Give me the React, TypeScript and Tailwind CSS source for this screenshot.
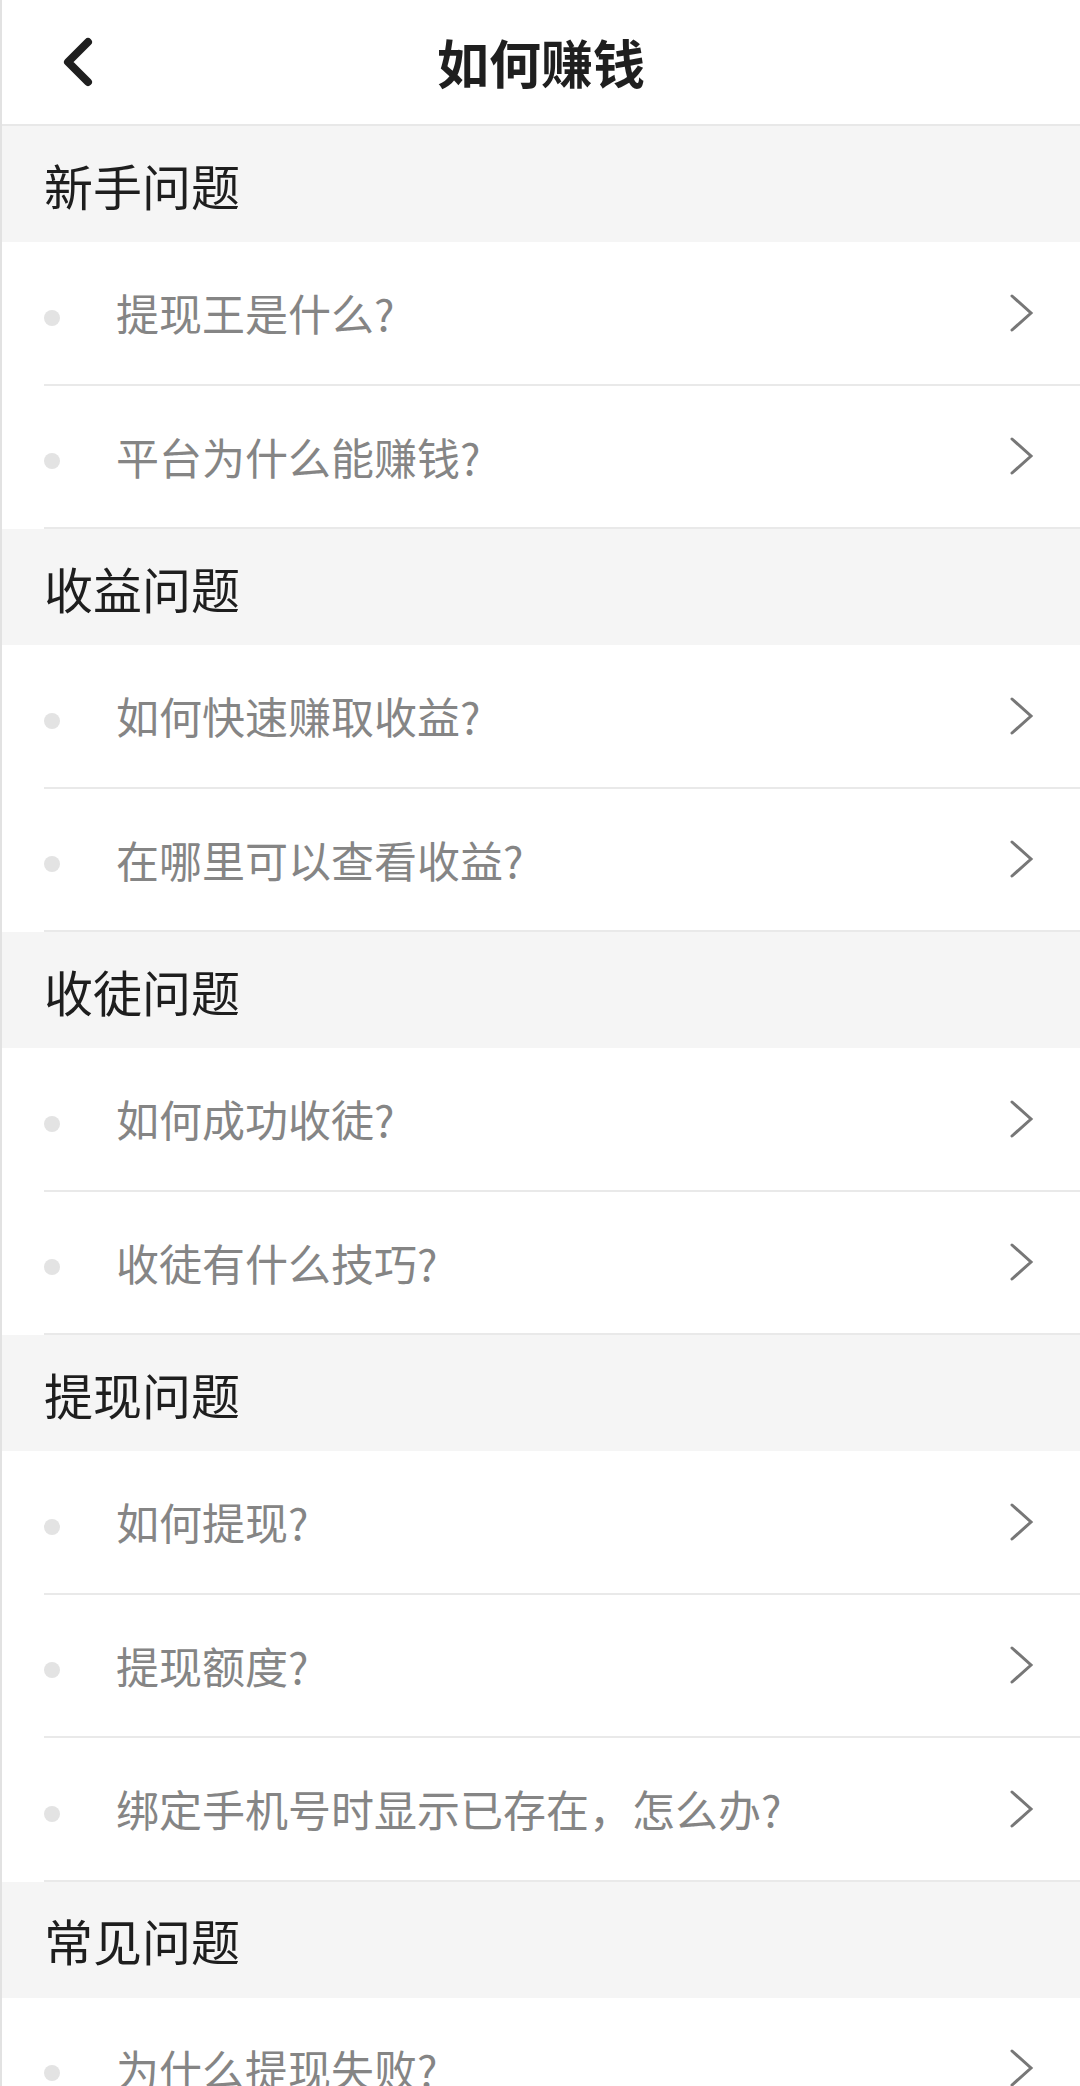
import { Fragment } from "react";

const sections = [
    { title: "新手问题", items: ["提现王是什么?", "平台为什么能赚钱?"] },
    { title: "收益问题", items: ["如何快速赚取收益?", "在哪里可以查看收益?"] },
    { title: "收徒问题", items: ["如何成功收徒?", "收徒有什么技巧?"] },
    { title: "提现问题", items: ["如何提现?", "提现额度?", "绑定手机号时显示已存在，怎么办?"] },
    { title: "常见问题", items: ["为什么提现失败?"] },
];

const BackIcon = () => (
    <svg width="40" height="56" viewBox="0 0 40 56" fill="none">
        <path d="M28 8 L8 28 L28 48" stroke="#1f1f1f" strokeWidth="8" strokeLinecap="round" strokeLinejoin="round" />
    </svg>
);

const ChevronIcon = () => (
    <svg width="26" height="40" viewBox="0 0 26 40" fill="none">
        <path d="M3 3 L22 20 L3 37" stroke="#777777" strokeWidth="3" strokeLinecap="round" strokeLinejoin="miter" />
    </svg>
);

export default function App() {
    return (
        <div
            className="w-[1080px] h-[2086px] overflow-hidden bg-white border-l-2 border-[#e2e2e2]"
            style={{ fontFamily: '"Noto Sans CJK SC", "Noto Sans", sans-serif' }}
        >
            <header className="relative h-[126px] flex items-center justify-center border-b-2 border-[#e8e8e8]">
                <button className="absolute left-[58px] top-[34px]">
                    <BackIcon />
                </button>
                <h1 className="text-[52px] font-bold text-[#1f1f1f] leading-none">如何赚钱</h1>
            </header>

            {sections.map((section) => (
                <Fragment key={section.title}>
                    <div className="h-[116px] bg-[#f5f5f5] flex items-center pl-[42px]">
                        <span className="text-[49px] leading-none text-[#1e1e1e]">{section.title}</span>
                    </div>
                    <ul>
                        {section.items.map((item) => (
                            <li
                                key={item}
                                className="ml-[42px] h-[143.5px] flex items-center pr-[45px] border-b-2 border-[#e9e9e9]"
                            >
                                <span className="w-4 h-4 rounded-full bg-[#e3e3e3] mt-[10px] shrink-0" />
                                <span className="ml-[56px] flex-1 text-[43px] leading-none text-[#858585]">
                                    {item}
                                </span>
                                <ChevronIcon />
                            </li>
                        ))}
                    </ul>
                </Fragment>
            ))}
        </div>
    );
}
